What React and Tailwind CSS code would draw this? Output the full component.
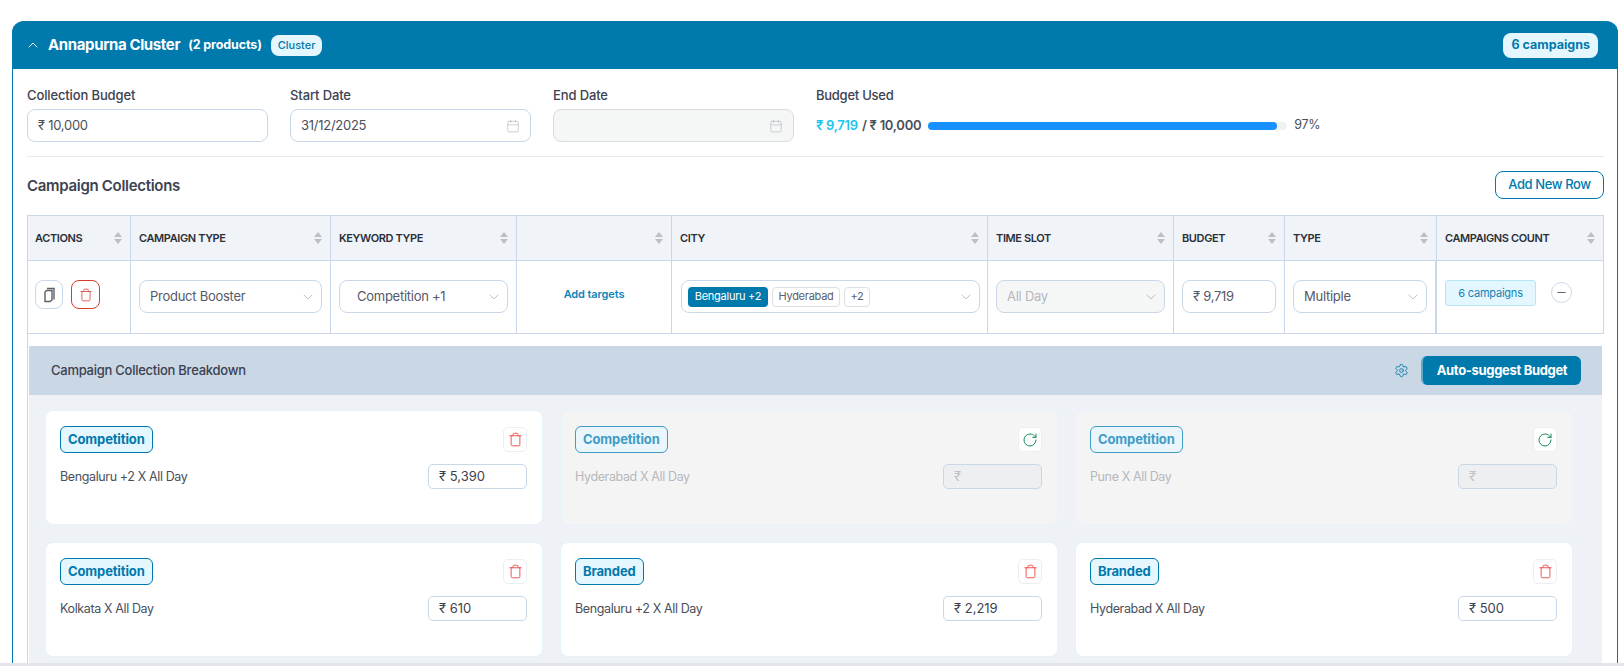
import { Calendar, ChevronDown, ChevronUp, Minus, RotateCw, Settings, Trash } from 'lucide-react';

const columns = [
  { label: 'Actions', width: 'w-[103px]' },
  { label: 'Campaign Type', width: 'w-[200px]' },
  { label: 'Keyword Type', width: 'w-[186px]' },
  { label: '', width: 'w-[155px]' },
  { label: 'City', width: 'w-[316px]' },
  { label: 'Time Slot', width: 'w-[186px]' },
  { label: 'Budget', width: 'w-[111px]' },
  { label: 'Type', width: 'w-[152px]' },
  { label: 'Campaigns Count', width: 'flex-1' },
];

const breakdown = [
  { tag: 'Competition', name: 'Bengaluru +2 X All Day', amount: '5,390' },
  { tag: 'Competition', name: 'Hyderabad X All Day', amount: '', off: true },
  { tag: 'Competition', name: 'Pune X All Day', amount: '', off: true },
  { tag: 'Competition', name: 'Kolkata X All Day', amount: '610' },
  { tag: 'Branded', name: 'Bengaluru +2 X All Day', amount: '2,219' },
  { tag: 'Branded', name: 'Hyderabad X All Day', amount: '500' },
];

const SortIcon = () => (
  <svg width="10" height="14" viewBox="0 0 10 14" className="shrink-0">
    <path d="M5 1 L9 6 L1 6 Z" fill="#bcc0c6" />
    <path d="M5 13 L9 8 L1 8 Z" fill="#bcc0c6" />
  </svg>
);

const CopyIcon = () => (
  <svg width="14" height="16" viewBox="0 0 14 16" fill="none" stroke="#5b606a" strokeWidth="1.4">
    <path d="M5 1.5 H12 V12.5" />
    <path d="M10 3.5 V13 L8 14.5 H3 V5 L4.5 3.5 Z" />
  </svg>
);

const Field = ({ label, value, disabled, icon }) => (
  <div className="w-[241px]">
    <div className="mb-[5px] text-[13px] leading-[18px] font-medium tracking-[-0.01em] text-[#3d4250]">{label}</div>
    <div
      className={`flex h-[33px] items-center justify-between rounded-lg border px-[10px] text-[13px] tracking-[-0.02em] text-[#4a4f5a] ${
        disabled ? 'border-[#d9dcdf] bg-[#f5f6f6]' : 'border-[#c9d8e8] bg-white'
      }`}
    >
      <span>{value}</span>
      {icon && <Calendar size={14} strokeWidth={1.2} className="text-[#b9bdc3]" />}
    </div>
  </div>
);

const Select = ({ children, className = '', disabled }) => (
  <div
    className={`flex h-[33px] items-center justify-between rounded-lg border border-[#c9d8e8] pr-[5px] text-[13px] tracking-[-0.02em] ${
      disabled ? 'bg-[#f5f7f7] text-[#b4b8bd]' : 'bg-white text-[#55596a]'
    } ${className}`}
  >
    {children}
    <ChevronDown size={16} strokeWidth={1} className="text-[#9aa4b0]" />
  </div>
);

const BreakdownCard = ({ tag, name, amount, off }) => (
  <div
    className={`h-[115px] rounded-lg border border-[#e8f2f9] pt-[15px] pr-[15px] pl-[14px] ${
      off ? 'bg-[#f4f4f5]' : 'bg-white'
    }`}
  >
    <div className="flex items-center justify-between">
      <span
        className={`flex h-[27px] items-center rounded-md border px-[7px] text-[13px] font-bold tracking-[-0.01em] ${
          off ? 'border-[#3f9dc5] bg-[#eaf6fc] text-[#3f9dc5]' : 'border-[#0079ac] bg-[#e4f6fe] text-[#0079ac]'
        }`}
      >
        {tag}
      </span>
      <button className="flex h-[25px] w-[24px] items-center justify-center rounded-[5px] border border-[#eceef2] bg-white">
        {off ? (
          <RotateCw size={16} strokeWidth={1.5} className="text-[#1a8a5a]" />
        ) : (
          <Trash size={15} strokeWidth={1.5} className="text-[#f04b4b]" />
        )}
      </button>
    </div>
    <div className="mt-[11px] flex items-center justify-between">
      <span className={`pt-[2px] text-[12.5px] tracking-[-0.03em] ${off ? 'text-[#b6b8bb]' : 'text-[#4a4f5a]'}`}>
        {name}
      </span>
      <div
        className={`flex h-[25px] w-[99px] items-center rounded-[5px] border border-[#c9d8e8] px-[10px] text-[13px] ${
          off ? 'bg-[#eeeff0] text-[#c0c2c4]' : 'bg-white text-[#3d4250]'
        }`}
      >
        ₹ {amount}
      </div>
    </div>
  </div>
);

export default function App() {
  return (
    <div className="relative h-[666px] overflow-hidden bg-white pt-[21px] pl-[12px] font-['Inter',sans-serif]">
      <div className="w-[1606px] rounded-t-xl border-x border-[#0079ac]">
        {/* cluster header */}
        <div className="-mx-px flex h-[48px] items-center justify-between rounded-t-xl bg-[#0079ac] pr-[20px] pl-[13px]">
          <div className="flex items-center">
            <ChevronUp size={16} strokeWidth={1.4} className="text-white" />
            <span className="ml-[7px] text-[15px] font-bold tracking-[-0.025em] text-white">Annapurna Cluster</span>
            <span className="ml-[8px] text-[12.5px] font-bold tracking-[-0.01em] text-white">(2 products)</span>
            <span className="ml-[9px] flex h-[21px] items-center rounded-lg bg-[#e4f6fe] px-[7px] text-[11px] font-medium text-[#0079ac]">
              Cluster
            </span>
          </div>
          <span className="flex h-[25px] items-center rounded-lg bg-[#e4f6fe] px-[8px] text-[12.5px] font-bold text-[#0079ac]">
            6 campaigns
          </span>
        </div>

        <div className="pr-[13px] pl-[14px]">
          {/* budget row */}
          <div className="flex gap-[22px] border-b border-[#e8eaee] pt-[17px] pb-[14px]">
            <Field label="Collection Budget" value="₹ 10,000" />
            <Field label="Start Date" value="31/12/2025" icon />
            <Field label="End Date" value="" disabled icon />
            <div className="flex-1">
              <div className="mb-[5px] text-[13px] leading-[18px] font-medium tracking-[-0.02em] text-[#3d4250]">
                Budget Used
              </div>
              <div className="flex h-[33px] items-center text-[13px] tracking-[-0.02em]">
                <span className="font-semibold text-[#1bc5f0]">₹ 9,719</span>
                <span className="ml-[4px] font-semibold text-[#4a4f5a]">/ ₹ 10,000</span>
                <div className="ml-[7px] h-[8px] w-[359px] rounded-full bg-[#f0f1f3]">
                  <div className="h-[8px] w-[349px] rounded-full bg-[#1890ff]" />
                </div>
                <span className="ml-[7px] text-[12.5px] text-[#4a4f5a]">97%</span>
              </div>
            </div>
          </div>

          <div className="flex items-center justify-between pt-[14px] pb-[16px]">
            <h2 className="pt-[2px] text-[15px] font-semibold tracking-[-0.02em] text-[#3d4250]">Campaign Collections</h2>
            <button className="h-[28px] w-[109px] rounded-lg border border-[#0079ac] text-[13px] font-medium tracking-[-0.03em] text-[#0079ac]">
              Add New Row
            </button>
          </div>

          {/* table */}
          <div className="flex h-[46px] border border-[#c9d8e8] bg-[#f0f3f8]">
            {columns.map((col, i) => (
              <div
                key={i}
                className={`flex items-center justify-between border-[#c9d8e8] pr-[7px] ${i === 0 ? 'pl-[7px]' : 'pl-[8px]'} ${
                  col.width
                } ${i < columns.length - 1 ? 'border-r' : ''}`}
              >
                <span className="text-[11px] font-semibold tracking-[-0.035em] text-[#2b2f38] uppercase">{col.label}</span>
                <SortIcon />
              </div>
            ))}
          </div>
          <div className="flex h-[73px] border-x border-b border-[#c9d8e8] bg-white">
            <div className="flex w-[103px] gap-[8px] border-r border-[#c9d8e8] pt-[19px] pl-[7px]">
              <button className="flex h-[29px] w-[28px] items-center justify-center rounded-lg border border-[#c9d8e8]">
                <CopyIcon />
              </button>
              <button className="flex h-[29px] w-[29px] items-center justify-center rounded-lg border border-[#dc3a2e]">
                <Trash size={14} strokeWidth={1.3} className="text-[#dc3a2e]" />
              </button>
            </div>
            <div className="w-[200px] border-r border-[#c9d8e8] px-[8px] pt-[19px]">
              <Select className="pl-[10px]">Product Booster</Select>
            </div>
            <div className="w-[186px] border-r border-[#c9d8e8] px-[8px] pt-[19px]">
              <Select className="pl-[17px]">Competition +1</Select>
            </div>
            <div className="flex w-[155px] justify-center border-r border-[#c9d8e8] pt-[25px]">
              <span className="text-[11px] font-semibold tracking-[-0.01em] text-[#0e86b8]">Add targets</span>
            </div>
            <div className="w-[316px] border-r border-[#c9d8e8] pt-[19px] pr-[7px] pl-[9px]">
              <Select className="pl-[6px]">
                <div className="flex flex-1 items-center gap-[4px] text-[11px]">
                  <span className="flex h-[20px] w-[80px] items-center justify-center rounded-[4px] bg-[#0079ac] text-white">
                    Bengaluru +2
                  </span>
                  <span className="flex h-[20px] w-[68px] items-center justify-center rounded-[4px] border border-[#dcdfe3] text-[#5b606a]">
                    Hyderabad
                  </span>
                  <span className="flex h-[20px] w-[26px] items-center justify-center rounded-[4px] border border-[#dcdfe3] text-[#5b606a]">
                    +2
                  </span>
                </div>
              </Select>
            </div>
            <div className="w-[186px] border-r border-[#c9d8e8] px-[8px] pt-[19px]">
              <Select className="pl-[10px]" disabled>All Day</Select>
            </div>
            <div className="w-[111px] border-r border-[#c9d8e8] px-[8px] pt-[19px]">
              <div className="flex h-[33px] items-center rounded-lg border border-[#c9d8e8] pl-[10px] text-[13px] tracking-[-0.02em] text-[#55596a]">
                ₹ 9,719
              </div>
            </div>
            <div className="w-[152px] border-r-2 border-[#c9d8e8] px-[8px] pt-[19px]">
              <Select className="pl-[10px]">Multiple</Select>
            </div>
            <div className="flex flex-1 items-start gap-[15px] pt-[19px] pl-[8px]">
              <span className="flex h-[26px] w-[91px] items-center justify-center rounded-[3px] border border-[#b8e4f8] bg-[#e4f6fe] text-[11px] tracking-[-0.02em] text-[#0e86b8]">
                6 campaigns
              </span>
              <button className="mt-[2px] flex h-[21px] w-[21px] items-center justify-center rounded-full border border-[#c9d8e8]">
                <Minus size={13} strokeWidth={1.5} className="text-[#3d4250]" />
              </button>
            </div>
          </div>

          {/* breakdown */}
          <div className="mr-[2px] border-l border-[#c9d8e8] pt-[12px] pl-px">
            <div className="flex h-[49px] items-center justify-between bg-[#cad7e4] px-[21px]">
              <span className="pl-px text-[13px] font-medium tracking-[-0.02em] text-[#3a4150]">
                Campaign Collection Breakdown
              </span>
              <div className="flex items-center gap-[12px]">
                <Settings size={15} strokeWidth={1.4} className="text-[#0079ac]" />
                <button className="h-[29px] w-[160px] rounded-md border-l-2 border-[#5aa9c9] bg-[#0079ac] text-[13px] font-bold tracking-[-0.025em] text-white">
                  Auto-suggest Budget
                </button>
              </div>
            </div>
            <div className="grid grid-cols-3 gap-x-[17px] gap-y-[17px] bg-[#eef2f7] pt-[15px] pr-[29px] pb-[20px] pl-[16px]">
              {breakdown.map((card, i) => (
                <BreakdownCard key={i} {...card} />
              ))}
            </div>
          </div>
        </div>
      </div>
      <div className="absolute inset-x-0 bottom-0 h-[3px] bg-[#e2e6ea]" />
    </div>
  );
}
